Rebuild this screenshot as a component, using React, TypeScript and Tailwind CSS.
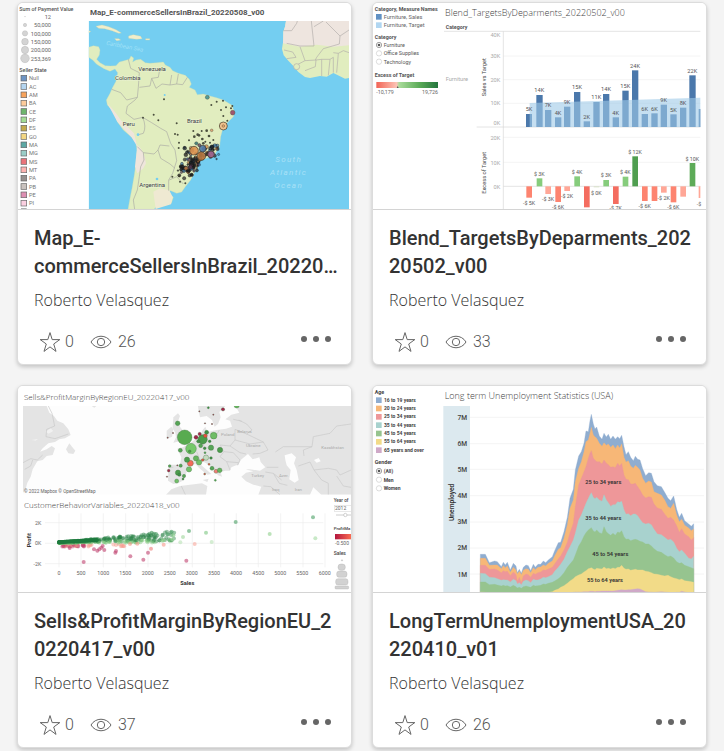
import type { ReactNode } from "react";

const SANS = "font-['Roboto','Noto_Sans',sans-serif]";

/* Small seeded generator so scattered marks keep the same place on every render. */
function seeded(seed: number) {
  let s = seed;
  return () => {
    s = (s * 16807) % 2147483647;
    return s / 2147483647;
  };
}

type LabelProps = {
  x: number;
  y: number;
  size?: number;
  fill?: string;
  weight?: number;
  anchor?: "start" | "middle" | "end";
  rotate?: boolean;
  italic?: boolean;
  children: ReactNode;
};

function Label({ x, y, size = 17, fill = "#666", weight = 400, anchor = "start", rotate, italic, children }: LabelProps) {
  return (
    <text
      x={x}
      y={y}
      fontSize={size}
      fill={fill}
      fontWeight={weight}
      textAnchor={anchor}
      fontStyle={italic ? "italic" : undefined}
      transform={rotate ? `rotate(-90 ${x} ${y})` : undefined}
    >
      {children}
    </text>
  );
}

function Thumb({ viewBox, label, children }: { viewBox: string; label: string; children: ReactNode }) {
  return (
    <svg viewBox={viewBox} role="img" aria-label={label} className="block h-auto w-full font-['Roboto','Noto_Sans',sans-serif]">
      {children}
    </svg>
  );
}

/* ---------- Brazil sellers map ---------- */

const states: [string, string][] = [
  ["Null", "#6f95c4"], ["AC", "#b5d5ef"], ["AM", "#f7a35c"], ["BA", "#fdcb9b"],
  ["CE", "#6fb56c"], ["DF", "#a3dc93"], ["ES", "#c4a94e"], ["GO", "#f3d683"],
  ["MA", "#5da8a4"], ["MG", "#9bcdc6"], ["MS", "#ea7379"], ["MT", "#feb3b0"],
  ["PA", "#96908e"], ["PB", "#c9c2be"], ["PE", "#dd8fb2"], ["PI", "#fbcfe0"],
];

const sizes: [string, number][] = [["12", 1], ["50,000", 5], ["100,000", 8], ["150,000", 10], ["200,000", 11], ["253,369", 13]];

function BrazilMap() {
  const rnd = seeded(77);
  const cluster = Array.from({ length: 150 }, (_, i) => {
    const t = rnd();
    const a = rnd() - 0.5;
    const b = rnd() - 0.5;
    const upper = i % 3 === 0;
    return {
      x: upper ? 560 + t * 95 + a * 18 : 590 - t * 40 + a * 44,
      y: upper ? 456 + b * 42 : 470 + t * 52 + b * 28,
      r: 2 + rnd() * 4,
      fill: ["#1d2a33", "#222", "#5a3b55", "#3e78a8", "#d08a4a", "#333", "#1b1b1b"][Math.floor(rnd() * 7)],
    };
  });
  const dots = [
    [492, 298], [461, 344], [429, 353], [475, 361], [530, 370], [525, 402], [533, 404], [537, 428], [567, 421],
    [536, 444], [580, 393], [583, 410], [593, 404], [597, 406], [607, 417], [610, 430], [627, 408], [620, 392],
    [634, 315], [663, 330], [678, 322], [670, 348], [693, 325], [697, 318], [650, 305], [669, 302], [640, 420],
    [654, 441], [648, 436], [540, 545], [556, 550], [517, 530], [682, 362], [605, 393], [616, 425], [630, 428],
  ];
  return (
    <Thumb viewBox="54 9 999 618" label="Map of e-commerce sellers in Brazil">
      <rect x="54" y="9" width="999" height="618" fill="#fff" />
      <Label x={58} y={32} size={16} weight={500} fill="#555">Sum of Payment Value</Label>
      {sizes.map(([t, r], i) => (
        <g key={t}>
          <circle cx="75" cy={50 + i * 25} r={r} fill="#d4d4d4" stroke="#aaa" strokeWidth="1" />
          <Label x={153} y={57 + i * 25} anchor="end" size={17}>{t}</Label>
        </g>
      ))}
      <Label x={58} y={216} size={16} weight={500} fill="#555">Seller State</Label>
      {states.map(([t, c], i) => (
        <g key={t}>
          <rect x="63" y={226 + i * 25} width="17" height="17" fill={c} stroke="#666" strokeWidth="2" />
          <Label x={87} y={241 + i * 25} size={17} fill="#777">{t}</Label>
        </g>
      ))}
      <rect x="63" y="625" width="17" height="2" fill="#888" />
      <Label x={270} y={45} size={24} weight={700} fill="#555">Map_E-commerceSellersInBrazil_20220508_v00</Label>

      <svg x="266" y="63" width="781" height="564" viewBox="266 63 781 564">
        <rect x="266" y="63" width="781" height="564" fill="#74cef1" />
        {/* Caribbean islands */}
        <path d="M288 79l18-4 20 5 22 9 16 10-8 1-20-8-22-6-18-1zM386 108l14-4 22 5 4 7-16 2-24-3zM344 116l12 0 6 4-12 2zM437 116h12v4h-12zM266 92l6 2-6 5z" fill="#f1eecb" stroke="#d9d7a8" />
        {/* South America */}
        <path
          d="M266 142L280 137 296 140 300 150 298 165 290 178 300 188 316 197 332 198 348 197 358 186 372 182 388 178 393 168 401 174 398 186 408 180 422 178 436 188 450 190 470 188 490 186 496 195 510 202 518 212 535 220 556 226 568 238 574 252 568 262 585 270 592 284 610 282 630 288 650 293 670 300 695 315 703 335 700 350 682 368 668 388 662 410 659 438 645 462 620 475 600 482 590 505 572 540 556 560 545 576 530 580 512 572 504 574 512 584 520 592 514 610 495 616 470 618 462 628 384 628 390 595 396 565 402 530 408 490 411 452 408 430 395 412 370 390 352 365 340 335 322 315 319 300 330 280 338 262 350 240 353 218 345 207 330 214 312 206 290 193 278 180 266 172Z"
          fill="#e1edbf"
          stroke="#c5dfba"
          strokeWidth="1"
        />
        <path d="M412 435Q432 450 438 490L430 505 412 520 405 500ZM322 310Q350 340 362 360L402 400 412 440 395 412 352 365Z" fill="#efe5dc" />
        <path d="M460 575l20-10 28 6 10 20-5 22-46 14z" fill="#efe9d2" />
        <path
          d="M385 178L392 205 418 218 415 262 412 292 380 300 362 278 335 268M412 292L405 300 382 318 378 340 402 358 428 352 455 368 482 385 500 395 512 430 525 450 530 482 518 520 506 540 506 572M428 352Q440 380 430 400L412 405M412 440L430 458 462 462 474 450 480 435 508 438M474 450L482 475 510 492 525 505M430 458L432 480 422 500 418 530 412 570 400 600 404 628M418 262L450 258 455 235 475 232 478 215 495 205M455 235L468 265 486 252 510 255 515 225M510 255L530 252 535 222M530 252L548 254 562 232M508 540L530 530 550 552"
          fill="none"
          stroke="#aaaaa4"
          strokeWidth="2"
          strokeLinejoin="round"
        />
        <circle cx="414" cy="404" r="4" fill="#74cef1" />
        <circle cx="471" cy="537" r="4" fill="#74cef1" />
        <circle cx="494" cy="285" r="3" fill="#74cef1" />
        {/* West Africa */}
        <g transform="translate(570 0)">
          <path d="M288 63L285 80 280 95 280 120 276 147 281 166 295 182 310 198 325 216 345 231 360 234 390 228 410 230 430 219 450 229 465 236 477 234V63Z" fill="#e1edbf" />
          <path d="M288 63L285 80 280 95 279 130 330 140 380 134 430 140 477 136V63Z" fill="#eee5df" />
          <path d="M280 92L305 92 320 70 322 63M364 63L372 138 330 138 290 130M372 80L400 63M408 66L450 108 448 132 400 146 380 172 376 180M450 108L477 90M282 150L308 156 318 172 290 176M330 140L345 182 320 195M345 182L378 180 376 200 345 212M378 180L395 178 395 228M395 178L420 178 415 226M420 178L430 172 430 218M430 158L445 160 440 218M445 160L460 152 477 158" fill="none" stroke="#b2aeaa" strokeWidth="2" />
          <circle cx="320" cy="200" r="9" fill="#e1edbf" stroke="#b2aeaa" strokeWidth="2" />
        </g>
        <g fill="#9fe0f7">
          <text fontSize="18" fontStyle="italic" transform="rotate(11 318 134)" x="318" y="134">Caribbean Sea</text>
        </g>
        <g className="tracking-[4px]">
          <Label x={866} y={487} size={24} fill="#a9e1f7" anchor="middle" italic>South</Label>
          <Label x={866} y={526} size={24} fill="#a9e1f7" anchor="middle" italic>Atlantic</Label>
          <Label x={866} y={564} size={24} fill="#a9e1f7" anchor="middle" italic>Ocean</Label>
        </g>
        {dots.map(([x, y], i) => (
          <circle key={i} cx={x} cy={y} r={i > 10 && i < 18 ? 4 : 3} fill="#4b4f3e" />
        ))}
        {cluster.map((d, i) => (
          <circle key={i} cx={d.x} cy={d.y} r={d.r} fill={d.fill} fillOpacity="0.75" stroke="#111" strokeWidth="1" />
        ))}
        <g stroke="#3b3327" strokeWidth="2">
          <circle cx="582" cy="452" r="13" fill="#dd9350" fillOpacity="0.9" />
          <circle cx="604" cy="468" r="13" fill="#b87840" fillOpacity="0.9" />
          <circle cx="608" cy="446" r="10" fill="#4d78a6" fillOpacity="0.9" />
          <circle cx="633" cy="463" r="10" fill="#a1638f" fillOpacity="0.9" />
          <circle cx="670" cy="378" r="12" fill="#f1c38e" />
          <circle cx="670" cy="378" r="4" fill="#e2a76d" strokeWidth="1" />
          <circle cx="698" cy="338" r="7" fill="#a0566f" strokeWidth="1" />
          <circle cx="622" cy="292" r="6" fill="#549d98" strokeWidth="1" />
          <circle cx="589" cy="430" r="5" fill="#4d8580" strokeWidth="1" />
          <circle cx="635" cy="391" r="4" fill="#dcaa7a" strokeWidth="1" />
        </g>
        <g stroke="#e8f1cf" strokeWidth="4" strokeLinejoin="round" paintOrder="stroke">
          {([["Venezuela", 415, 214], ["Colombia", 345, 240], ["Peru", 368, 378], ["Brazil", 561, 369], ["Argentina", 418, 562]] as [string, number, number][]).map(([t, x, y]) => (
            <text key={t} x={x} y={y} fontSize="18" fontWeight="400" fill="#3d3d48">{t}</text>
          ))}
        </g>
      </svg>
    </Thumb>
  );
}

/* ---------- Targets by department ---------- */

/* centre x, top of the sales bar, sales label, end of the excess bar, excess label, label y */
const targets: [number, number, string, number, string, number][] = [
  [495, 342, "5K", 593, "-$ 5K", 615], [526, 285, "14K", 535, "$ 3K", 527], [552, 330, "7K", 582, "-$ 3K", 603],
  [582, 352, "4K", 606, "-$ 6K", 626], [609, 320, "9K", 573, "-$ 2K", 595], [639, 276, "15K", 529, "$ 4K", 522],
  [668, 364, "2K", 622, "", 0], [697, 306, "11K", 562, "$ 0K", 584], [726, 282, "14K", 540, "$ 3K", 532],
  [755, 352, "4K", 612, "-$ 7K", 631], [784, 272, "15K", 530, "$ 4K", 522], [813, 211, "24K", 469, "$ 12K", 462],
  [842, 342, "6K", 603, "-$ 6K", 625], [871, 340, "6K", 603, "", 0], [899, 314, "9K", 578, "-$ 2K", 599],
  [928, 343, "5K", 607, "-$ 6K", 628], [957, 323, "8K", 590, "", 0], [985, 226, "22K", 489, "$ 10K", 482],
];

function excessColor(end: number) {
  if (end < 480) return "#4f9e50";
  if (end < 500) return "#5dab58";
  if (end < 559) return "#86cc7c";
  if (end < 566) return "#d8e2c8";
  if (end < 592) return "#ffa797";
  if (end < 610) return "#fd8470";
  return "#f46d60";
}

function TargetsChart() {
  return (
    <Thumb viewBox="27 9 999 618" label="Sales against targets by department">
      <defs>
        <linearGradient id="excess">
          <stop offset="0" stopColor="#f26456" />
          <stop offset="0.33" stopColor="#fcc4b5" />
          <stop offset="0.37" stopColor="#a9dc9a" />
          <stop offset="0.7" stopColor="#5bab58" />
          <stop offset="1" stopColor="#24753e" />
        </linearGradient>
      </defs>
      <rect x="27" y="9" width="999" height="618" fill="#fff" />
      <Label x={32} y={32} size={16} weight={700} fill="#555">Category, Measure Names</Label>
      <rect x="36" y="42" width="17" height="17" fill="#6291c3" />
      <Label x={59} y={57} size={17}>Furniture, Sales</Label>
      <rect x="36" y="67" width="17" height="17" fill="#b1d6f1" />
      <Label x={59} y={82} size={17}>Furniture, Target</Label>
      <Label x={32} y={116} size={16} weight={700} fill="#555">Category</Label>
      {["Furniture", "Office Supplies", "Technology"].map((t, i) => (
        <g key={t}>
          <circle cx="45" cy={135 + i * 25} r="8" fill="#fff" stroke={i ? "#ccc" : "#777"} strokeWidth="2" />
          {i === 0 && <circle cx="45" cy="135" r="4" fill="#555" />}
          <Label x={59} y={141 + i * 25} size={16} fill="#555">{t}</Label>
        </g>
      ))}
      <Label x={32} y={232} size={16} weight={700} fill="#555">Excess of Target</Label>
      <rect x="37" y="246" width="185" height="18" fill="url(#excess)" />
      <path d="M101 258l3 6h-6z" fill="#555" />
      <Label x={37} y={282} size={16}>-10,179</Label>
      <Label x={222} y={282} size={16} anchor="end">19,726</Label>

      <g className="font-['Open_Sans','Noto_Sans',sans-serif]">
        <Label x={243} y={49} size={27} weight={300} fill="#444">Blend_TargetsByDeparments_20220502_v00</Label>
      </g>
      <Label x={245} y={88} weight={700} size={16} fill="#555">Category</Label>
      <Label x={245} y={243} size={17} fill="#aaa">Furniture</Label>
      <Label x={365} y={289} size={17} fill="#444" rotate>Sales vs Target</Label>
      <Label x={365} y={581} size={17} fill="#444" rotate>Excess of Target</Label>
      <g stroke="#eee" strokeWidth="2">
        <path d="M418 168H1009M418 239H1009M418 310H1009M418 412H1009M418 487H1009" />
      </g>
      <g stroke="#d6d6d6" strokeWidth="2">
        <path d="M240 94H1009M418 94V627M338 381H1009M418 559H1009" />
      </g>
      {([["40K", 112], ["30K", 174], ["20K", 245], ["10K", 316], ["0K", 376], ["20K", 419], ["10K", 494], ["0K", 567]] as [string, number][]).map(([t, y]) => (
        <Label key={y} x={409} y={y} size={17} fill="#aaa" anchor="end">{t}</Label>
      ))}

      <rect x="486" y="342" width="18" height="39" fill="#4b78ab" />
      {targets.slice(1).map(([x, y]) => (
        <rect key={x} x={x - 9} y={y} width="19" height={381 - y} fill="#4b78ab" />
      ))}
      <rect x="1004" y="327" width="5" height="54" fill="#4b78ab" />
      <path d="M497 309L700 303 1009 293V381H497Z" fill="#9fc9e8" fillOpacity="0.6" />
      {targets.map(([x, y, t, end, label, ly]) => (
        <g key={x}>
          <Label x={x} y={y - 8} size={17} fill="#555" anchor="middle">{t}</Label>
          <rect x={x - 8} y={Math.min(559, end)} width="17" height={Math.abs(end - 559)} fill={excessColor(end)} />
          {label && <Label x={x} y={ly} size={16} fill="#555" anchor="middle">{label}</Label>}
        </g>
      ))}
      <rect x="1004" y="559" width="5" height="35" fill="#ffa797" />
      <Label x={998} y={617} size={16}>-$</Label>
    </Thumb>
  );
}

/* ---------- Sells and profit by region ---------- */

const bubbles: [number, number, number, string][] = [
  [554, 172, 22, "#58ab50"], [573, 206, 16, "#75c86a"], [533, 130, 7, "#56a556"], [541, 211, 6, "#56a556"],
  [608, 178, 14, "#4b9c4b"], [616, 167, 6, "#e8503e"], [641, 167, 10, "#6fbd66"], [588, 172, 6, "#a5264c"],
  [599, 162, 5, "#a5264c"], [620, 157, 6, "#3f8f45"], [633, 203, 8, "#56a556"], [660, 210, 8, "#4b9c4b"],
  [588, 235, 8, "#65b45d"], [597, 247, 8, "#72c069"], [618, 233, 8, "#c5dbc0"], [571, 250, 9, "#f4695a"],
  [561, 239, 8, "#4b9c4b"], [567, 268, 8, "#72c069"], [636, 265, 6, "#56a556"], [648, 274, 6, "#ee7f78"],
  [659, 271, 7, "#65b45d"], [509, 258, 4, "#56a556"], [506, 272, 4, "#a5264c"], [542, 257, 5, "#56a556"],
  [534, 278, 8, "#4b9c4b"], [538, 284, 5, "#3f8f45"], [530, 303, 6, "#72c069"], [552, 288, 5, "#56a556"],
  [646, 301, 3, "#56a556"], [614, 282, 3, "#d0574d"], [608, 240, 4, "#e8503e"], [633, 234, 4, "#3f8f45"],
  [669, 88, 5, "#a5264c"], [625, 83, 3, "#3f8f45"], [640, 104, 2, "#a5264c"], [598, 94, 2, "#a5264c"],
  [615, 130, 2, "#a5264c"], [636, 132, 2, "#a5264c"], [710, 76, 8, "#65b45d"], [519, 159, 2, "#a5264c"],
  [503, 173, 2, "#a5264c"], [602, 197, 6, "#56a556"], [614, 205, 4, "#3f8f45"], [629, 184, 4, "#3f8f45"],
  [532, 256, 2, "#a5264c"], [501, 290, 2, "#a5264c"], [549, 297, 3, "#3f8f45"], [627, 253, 3, "#e8503e"],
  [595, 184, 5, "#3f8f45"], [569, 214, 4, "#4b9c4b"], [615, 218, 3, "#56a556"],
];

const outliers: [number, number, string][] = [
  [251, 546, "#c0436f"], [391, 529, "#c0436f"], [430, 539, "#c0436f"], [559, 542, "#c0436f"], [444, 518, "#c0436f"],
  [453, 506, "#ef7b77"], [346, 518, "#c0436f"], [348, 513, "#c0436f"], [292, 512, "#c0436f"], [282, 508, "#c0436f"],
  [304, 503, "#c0436f"], [313, 510, "#c0436f"], [298, 508, "#c0436f"], [308, 498, "#c0436f"], [209, 504, "#c0436f"],
  [370, 498, "#f89a8c"], [390, 492, "#f89a8c"], [412, 491, "#f89a8c"], [491, 494, "#f89a8c"], [584, 492, "#f8a89c"],
  [567, 453, "#4ba066"], [618, 458, "#7cc681"], [549, 471, "#9fd69b"], [541, 487, "#b9e2b5"], [635, 486, "#b9e2b5"],
  [707, 426, "#4ba066"], [809, 462, "#8fd08c"], [939, 412, "#4ba066"], [946, 475, "#a4dba1"], [515, 455, "#4ba066"],
  [520, 466, "#7cc681"], [502, 463, "#4ba066"], [468, 462, "#3f955a"], [455, 458, "#3f955a"], [517, 478, "#a4dba1"],
];

function ProfitChart() {
  const rnd = seeded(411);
  const swarm = Array.from({ length: 400 }, (_, i) => {
    const t = Math.pow(rnd(), 2);
    const x = 178 + t * 345;
    const lift = rnd();
    const dark = i % 3 !== 0;
    return { x, y: dark ? 487 - t * 30 * lift - t * 4 : 488 - t * 12 * lift, fill: dark ? "#2a8348" : "#86c982" };
  });
  const losses = Array.from({ length: 55 }, (_, i) => {
    const t = rnd();
    return { x: 185 + t * (i % 2 ? 70 : 190), y: 493 + rnd() * 7, fill: i % 2 ? "#c0436f" : "#f6a092" };
  });
  return (
    <Thumb viewBox="54 18 999 618" label="Profit margin by European region">
      <defs>
        <linearGradient id="ratio">
          <stop offset="0" stopColor="#b3163f" />
          <stop offset="1" stopColor="#fa6c52" />
        </linearGradient>
      </defs>
      <rect x="54" y="18" width="999" height="618" fill="#fff" />
      <g className="font-['Open_Sans','Noto_Sans',sans-serif]">
        <Label x={72} y={61} size={24} weight={300} fill="#444">Sells&amp;ProfitMarginByRegionEU_20220417_v00</Label>
        <Label x={72} y={383} size={24} weight={300} fill="#444">CustomerBehaviorVariables_20220418_v00</Label>
      </g>
      <svg x="69" y="78" width="984" height="266" viewBox="69 78 984 266">
        <rect x="69" y="78" width="984" height="266" fill="#fdfdfd" />
        <g fill="#e4e4e4">
          <path d="M69 78H140L148 98 162 108 172 122 190 130 205 148 212 165 195 175 178 178 165 186 145 190 128 205 120 215 140 208 155 198 165 205 158 225 140 228 128 240 112 244 98 268 92 290 82 308 76 330 69 338Z" />
          <path d="M198 208L208 190 216 200 226 212 220 222 205 220Z" />
          <path d="M275 78h14l-6 5z" />
          <path d="M520 112l14-12 6 8-6 16 6 16 10 14 8 18-12 10-26 6 8-16-2-14-8-14z" />
          <path d="M500 152l14-12 6 8-4 22-16 8z" />
          <path d="M532 206L548 202 568 192 588 176 600 168 608 150 616 140 622 156 650 150 678 146 696 140 690 122 676 118 694 104 718 98 706 78H1053V344H964L940 322 930 344H775L784 320 760 314 738 304 724 290 738 278 760 274 744 270 712 254 694 262 690 272 676 272 662 276 666 290 654 286 642 270 626 254 608 244 604 256 618 268 634 282 622 284 600 266 586 252 564 258 560 276 552 300 534 310 520 312 504 302 506 254 540 254 544 232Z" />
          <path d="M498 344L514 328 540 318 606 310 622 318 618 344Z" />
          <path d="M594 78H676L658 96 662 112 654 132 644 140 636 120 620 108 600 112 596 94Z" />
          <path d="M608 300l18-4-4 10z" />
        </g>
        <g fill="#fdfdfd">
          <path d="M724 268L712 262 722 240 744 222 758 238 778 232 782 246 796 262 780 272 750 268Z" />
          <path d="M854 226L875 220 888 232 882 250 890 270 896 300 884 308 868 298 872 270 860 256 856 240Z" />
          <path d="M942 240l14-6 6 10-12 4z" />
          <path d="M136 155l16-10 8 8-14 8zM95 180l20-4-8 6z" opacity="0.5" />
          <path d="M738 312L775 322 768 344H738z" />
        </g>
        <path
          d="M145 78L156 100 164 138 140 148 138 170 165 176 205 162M69 248L92 236 112 240 128 225M74 268L92 258 98 240M646 172L658 150M705 148L705 180 690 198 660 195M705 148L740 162 756 150 740 132 716 120M705 180L750 192 790 186 804 210 780 220 758 222M740 162L790 186M690 198L720 218 738 222M660 195L672 215 700 218 720 240 712 256M672 215L660 230 680 245 715 248M680 245L690 270M936 200L940 170 990 160 1010 138 1053 132M936 200L910 210 912 228M936 200L850 200 826 216M895 258L930 246 942 270 985 265 1010 270 1020 285 1053 270M942 270L965 300 985 310 985 344M796 276L820 280 845 300M800 262L835 262M790 318L812 320 840 344M700 118L726 124M602 160L612 200 640 210M590 215L600 240M505 262L520 262M1010 288L1030 318 1053 322M820 280L838 310 862 316M544 318L556 344"
          fill="none"
          stroke="#c8c8c8"
          strokeWidth="2"
          strokeLinejoin="round"
        />
        <g fill="#aaa" fontSize="13">
          <text x="663" y="169">Poland</text><text x="712" y="160">Belarus</text><text x="738" y="200">Ukraine</text>
          <text x="754" y="291">Turkey</text><text x="816" y="334">Iraq</text><text x="884" y="334">Iran</text>
          <text x="964" y="206">Kazakhstan</text><text x="837" y="291">Azer.</text>
        </g>
        {bubbles.map(([x, y, r, c], i) => (
          <circle key={i} cx={x} cy={y} r={r} fill={c} stroke="#3c6b3c" strokeWidth="1" />
        ))}
        <Label x={72} y={339} size={14} fill="#666">© 2022 Mapbox © OpenStreetMap</Label>
      </svg>

      <path d="M135 428H970M135 490H970M135 551H970M177 400V562M243 400V562M310 400V562M377 400V562M444 400V562M510 400V562M577 400V562M643 400V562M709 400V562M775 400V562M842 400V562M909 400V562M975 400V562" stroke="#ededed" strokeWidth="2" />
      <Label x={124} y={434} size={16} anchor="end">2K</Label>
      <Label x={124} y={496} size={16} anchor="end">0K</Label>
      <Label x={124} y={557} size={16} anchor="end">-2K</Label>
      <Label x={93} y={502} size={17} weight={700} fill="#333" rotate>Profit</Label>
      {Array.from({ length: 13 }, (_, i) => (
        <Label key={i} x={Math.round(177 + i * 66.4)} y={584} size={16} anchor="middle">{i * 500}</Label>
      ))}
      <Label x={562} y={614} size={17} weight={700} fill="#333" anchor="middle">Sales</Label>
      {losses.map((d, i) => <circle key={i} cx={d.x} cy={d.y} r="6" fill={d.fill} fillOpacity="0.5" />)}
      {swarm.map((d, i) => <circle key={i} cx={d.x} cy={d.y} r="6" fill={d.fill} fillOpacity="0.45" />)}
      <path d="M177 487L290 480" stroke="#1d7a3e" strokeWidth="12" strokeLinecap="round" />
      {outliers.map(([x, y, c], i) => <circle key={i} cx={x} cy={y} r="6" fill={c} fillOpacity="0.6" />)}

      <Label x={1001} y={367} size={14} weight={500} fill="#444">Year of</Label>
      <rect x="1003" y="376" width="60" height="18" fill="#fff" stroke="#ddd" strokeWidth="2" />
      <Label x={1005} y={390} size={15}>2012</Label>
      <path d="M1008 405H1053" stroke="#ccc" strokeWidth="3" />
      <circle cx="1036" cy="405" r="5" fill="#fff" stroke="#bbb" strokeWidth="2" />
      <Label x={1001} y={449} size={13} weight={500} fill="#444">ProfitMa</Label>
      <rect x="1005" y="462" width="48" height="16" fill="url(#ratio)" />
      <Label x={1005} y={494} size={15}>-0.500</Label>
      <Label x={1001} y={524} size={15} weight={500} fill="#444">Sales</Label>
      <g fill="#d2d2d2" stroke="#aaa" strokeWidth="1">
        <circle cx="1026" cy="541" r="2" />
        <rect x="1014" y="552" width="22" height="19" rx="9" />
        <rect x="1010" y="573" width="31" height="19" rx="8" />
        <rect x="1007" y="596" width="37" height="19" rx="7" />
        <rect x="1005" y="618" width="41" height="9" rx="3" />
      </g>
    </Thumb>
  );
}

/* ---------- Unemployment ---------- */

const ages: [string, string][] = [
  ["16 to 19 years", "#8fadd0"], ["20 to 24 years", "#f7b777"], ["25 to 34 years", "#ee9799"],
  ["35 to 44 years", "#a8d2ce"], ["45 to 54 years", "#96c48f"], ["55 to 64 years", "#f2db88"],
  ["65 years and over", "#cfa9c8"],
];

/* x, then the upper edge of each age band from youngest to oldest */
const bands: number[][] = [
  [349, 523, 535, 556, 580, 606, 636, 639], [364, 523, 535, 556, 581, 606, 637, 639], [376, 548, 556, 568, 592, 614, 638, 639],
  [392, 543, 555, 567, 593, 613, 638, 639], [400, 545, 555, 570, 596, 615, 638, 639], [412, 560, 566, 578, 601, 618, 638, 639],
  [418, 547, 557, 572, 599, 616, 638, 639], [424, 555, 563, 575, 600, 618, 638, 639], [430, 547, 558, 574, 600, 617, 638, 639],
  [439, 570, 577, 587, 606, 621, 638, 639], [448, 550, 562, 576, 598, 616, 637, 639], [456, 558, 570, 584, 602, 620, 638, 639],
  [460, 578, 582, 604, 612, 624, 638, 639], [466, 568, 574, 592, 608, 622, 638, 639], [472, 580, 584, 608, 614, 625, 639, 639],
  [478, 562, 571, 588, 604, 620, 638, 639], [486, 555, 566, 582, 600, 618, 638, 639], [493, 557, 568, 584, 602, 620, 638, 639],
  [500, 572, 578, 592, 608, 622, 638, 639], [508, 553, 563, 580, 598, 616, 638, 639], [514, 562, 569, 583, 600, 618, 638, 639],
  [522, 553, 562, 578, 600, 617, 638, 639], [530, 553, 561, 576, 597, 616, 638, 639],
  [538, 543, 555, 570, 592, 612, 637, 639], [545, 548, 558, 571, 593, 613, 637, 639], [553, 540, 550, 567, 590, 610, 637, 639],
  [565, 530, 543, 562, 584, 607, 635, 639], [572, 512, 528, 552, 574, 603, 631, 639], [583, 488, 508, 536, 562, 596, 627, 639],
  [590, 487, 503, 528, 553, 590, 622, 639], [600, 455, 475, 510, 538, 578, 617, 639], [610, 412, 435, 487, 515, 562, 610, 639],
  [618, 355, 385, 458, 500, 552, 603, 638], [628, 328, 360, 430, 480, 540, 596, 637], [634, 270, 305, 380, 460, 525, 590, 636],
  [644, 228, 265, 315, 420, 498, 585, 636], [652, 215, 245, 295, 405, 485, 582, 636], [660, 190, 215, 275, 385, 468, 576, 635],
  [666, 153, 185, 260, 370, 458, 572, 635], [673, 155, 180, 235, 355, 450, 566, 635], [678, 122, 160, 220, 345, 446, 565, 634],
  [682, 103, 142, 212, 338, 443, 563, 634], [688, 132, 165, 235, 352, 453, 567, 634], [693, 147, 170, 240, 356, 456, 569, 635],
  [698, 141, 175, 245, 352, 450, 565, 634], [706, 168, 190, 245, 360, 458, 566, 634], [714, 178, 199, 252, 364, 461, 567, 633],
  [720, 160, 188, 240, 344, 440, 561, 633], [727, 171, 196, 250, 360, 455, 566, 633], [733, 163, 192, 254, 368, 461, 565, 633],
  [740, 178, 202, 262, 379, 466, 567, 633], [747, 168, 195, 260, 374, 460, 564, 633], [754, 178, 206, 263, 374, 466, 566, 632],
  [761, 170, 195, 250, 365, 456, 562, 631], [767, 176, 204, 258, 367, 458, 562, 630], [773, 166, 192, 250, 364, 452, 556, 629],
  [780, 200, 232, 285, 390, 470, 565, 630], [786, 224, 246, 298, 403, 478, 568, 630], [793, 215, 242, 299, 401, 477, 567, 629],
  [800, 232, 258, 312, 407, 482, 571, 629], [808, 242, 265, 312, 402, 479, 569, 628], [814, 229, 256, 310, 402, 478, 568, 627],
  [821, 238, 262, 320, 407, 480, 570, 626], [828, 240, 270, 330, 418, 484, 570, 627], [836, 266, 295, 345, 428, 486, 570, 631],
  [845, 287, 310, 354, 432, 492, 574, 635], [854, 278, 303, 350, 430, 492, 575, 636], [862, 280, 306, 352, 434, 498, 578, 636],
  [870, 305, 335, 372, 448, 506, 582, 637], [880, 317, 340, 384, 462, 514, 583, 636], [892, 320, 345, 388, 464, 517, 586, 635],
  [902, 337, 360, 402, 472, 524, 588, 636], [912, 355, 380, 415, 480, 530, 586, 637], [920, 362, 385, 412, 478, 528, 590, 638],
  [929, 348, 370, 420, 486, 534, 594, 638], [938, 388, 405, 437, 505, 545, 596, 637], [946, 412, 425, 457, 515, 550, 599, 637],
  [953, 400, 418, 446, 510, 548, 597, 634], [962, 422, 436, 462, 520, 556, 602, 636], [974, 432, 444, 470, 535, 560, 604, 638],
  [982, 439, 452, 480, 537, 563, 605, 639], [989, 431, 447, 473, 529, 566, 607, 639],
];

function UnemploymentChart() {
  return (
    <Thumb viewBox="27 18 999 618" label="Unemployment by age over time">
      <rect x="27" y="18" width="999" height="618" fill="#fff" />
      <Label x={32} y={42} size={16} weight={700} fill="#444">Age</Label>
      {ages.map(([t, c], i) => (
        <g key={t}>
          <rect x="36" y={52 + i * 25} width="17" height="17" fill={c} />
          <Label x={60} y={65 + i * 25} weight={700} size={15} fill="#444">{t}</Label>
        </g>
      ))}
      <Label x={32} y={253} size={16} weight={700} fill="#444">Gender</Label>
      {["(All)", "Men", "Women"].map((t, i) => (
        <g key={t}>
          <circle cx="45" cy={273 + i * 26} r="8" fill="#fff" stroke={i ? "#ccc" : "#777"} strokeWidth="2" />
          {i === 0 && <circle cx="45" cy="273" r="4" fill="#555" />}
          <Label x={59} y={279 + i * 26} weight={700} size={15} fill="#444">{t}</Label>
        </g>
      ))}
      <g className="font-['Open_Sans','Noto_Sans',sans-serif]">
        <Label x={242} y={58} size={27} weight={300} fill="#444">Long term Unemployment Statistics (USA)</Label>
      </g>
      <rect x="238" y="78" width="80" height="560" fill="#dce9ef" />
      <path d="M318 112H1020M318 191H1020M318 268H1020M318 347H1020M318 426H1020M318 504H1020M318 582H1020" stroke="#efefef" strokeWidth="2" />
      {[120, 198, 276, 355, 433, 511, 590].map((y, i) => (
        <Label key={y} x={309} y={y} size={20} weight={500} fill="#444" anchor="end">{`${7 - i}M`}</Label>
      ))}
      <Label x={269} y={423} size={20} weight={600} fill="#333" rotate>Unemployed</Label>
      {ages.map(([t, c], k) => (
        <polygon key={t} points={`349,640 ${bands.map((b) => `${b[0]},${b[k + 1]}`).join(" ")} 989,640`} fill={c} stroke={c} strokeWidth="1" />
      ))}
      <Label x={664} y={313} size={17} weight={600} fill="#333">25 to 34 years</Label>
      <Label x={664} y={419} size={17} weight={600} fill="#333">35 to 44 years</Label>
      <Label x={685} y={528} size={17} weight={600} fill="#333">45 to 54 years</Label>
      <Label x={669} y={607} size={17} weight={600} fill="#333">55 to 64 years</Label>
    </Thumb>
  );
}

/* ---------- Cards ---------- */

function StarIcon() {
  return (
    <svg viewBox="0 0 22 22" className="size-[22px]" fill="none" stroke="#666" strokeWidth="1" aria-hidden="true">
      <path d="M11 1.6L13.2 8.6H20.8L14.7 13L17 20.4L11 15.9L5 20.4L7.3 13L1.2 8.6H8.8Z" />
    </svg>
  );
}

function EyeIcon() {
  return (
    <svg viewBox="0 0 22 14" className="h-[14px] w-[22px]" fill="none" stroke="#666" strokeWidth="1" aria-hidden="true">
      <path d="M1 7C5.5 -.7 16.5 -.7 21 7C16.5 14.7 5.5 14.7 1 7Z" />
      <circle cx="11" cy="7" r="3.7" />
    </svg>
  );
}

type Viz = { title: string; views: number; picture: ReactNode };

const items: Viz[] = [
  { title: "Map_E-commerceSellersInBrazil_20220508_v00", views: 26, picture: <BrazilMap /> },
  { title: "Blend_TargetsByDeparments_20220502_v00", views: 33, picture: <TargetsChart /> },
  { title: "Sells&ProfitMarginByRegionEU_20220417_v00", views: 37, picture: <ProfitChart /> },
  { title: "LongTermUnemploymentUSA_20220410_v01", views: 26, picture: <UnemploymentChart /> },
];

function Card({ title, views, picture }: Viz) {
  return (
    <article className="overflow-hidden rounded-md border border-[#dcdcdc] bg-white shadow-[0_2px_4px_rgba(0,0,0,0.2)]">
      <a href="#viz" className="block border-b border-[#d4d4d4]">{picture}</a>
      <div className="pt-3.5 pr-3 pb-2 pl-4">
        <h2 className="line-clamp-2 text-[20px] leading-7 font-medium wrap-break-word text-[#333]">
          <a href="#viz">{title}</a>
        </h2>
        <a href="#author" className="mt-2 block font-['Open_Sans','Noto_Sans',sans-serif] text-base leading-6 font-light text-[#333]">
          Roberto Velasquez
        </a>
        <div className="mt-4 flex items-center pl-[5px] text-base leading-7 font-light text-[#555]">
          <button type="button" aria-label="Favorite" className="flex items-center gap-1">
            <StarIcon />
            <span>0</span>
          </button>
          <span className="ml-4 flex items-center gap-1.5">
            <EyeIcon />
            <span>{views}</span>
          </span>
          <button type="button" aria-label="More actions" className="mr-2 mb-1.5 ml-auto flex gap-1.5">
            <span className="size-1.5 rounded-full bg-[#666]" />
            <span className="size-1.5 rounded-full bg-[#666]" />
            <span className="size-1.5 rounded-full bg-[#666]" />
          </button>
        </div>
      </div>
    </article>
  );
}

export default function App() {
  return (
    <main className={`min-h-screen bg-[#f4f4f4] px-[17px] pt-0.5 ${SANS}`}>
      <div className="grid grid-cols-2 gap-5">
        {items.map((v) => (
          <Card key={v.title} {...v} />
        ))}
      </div>
    </main>
  );
}
